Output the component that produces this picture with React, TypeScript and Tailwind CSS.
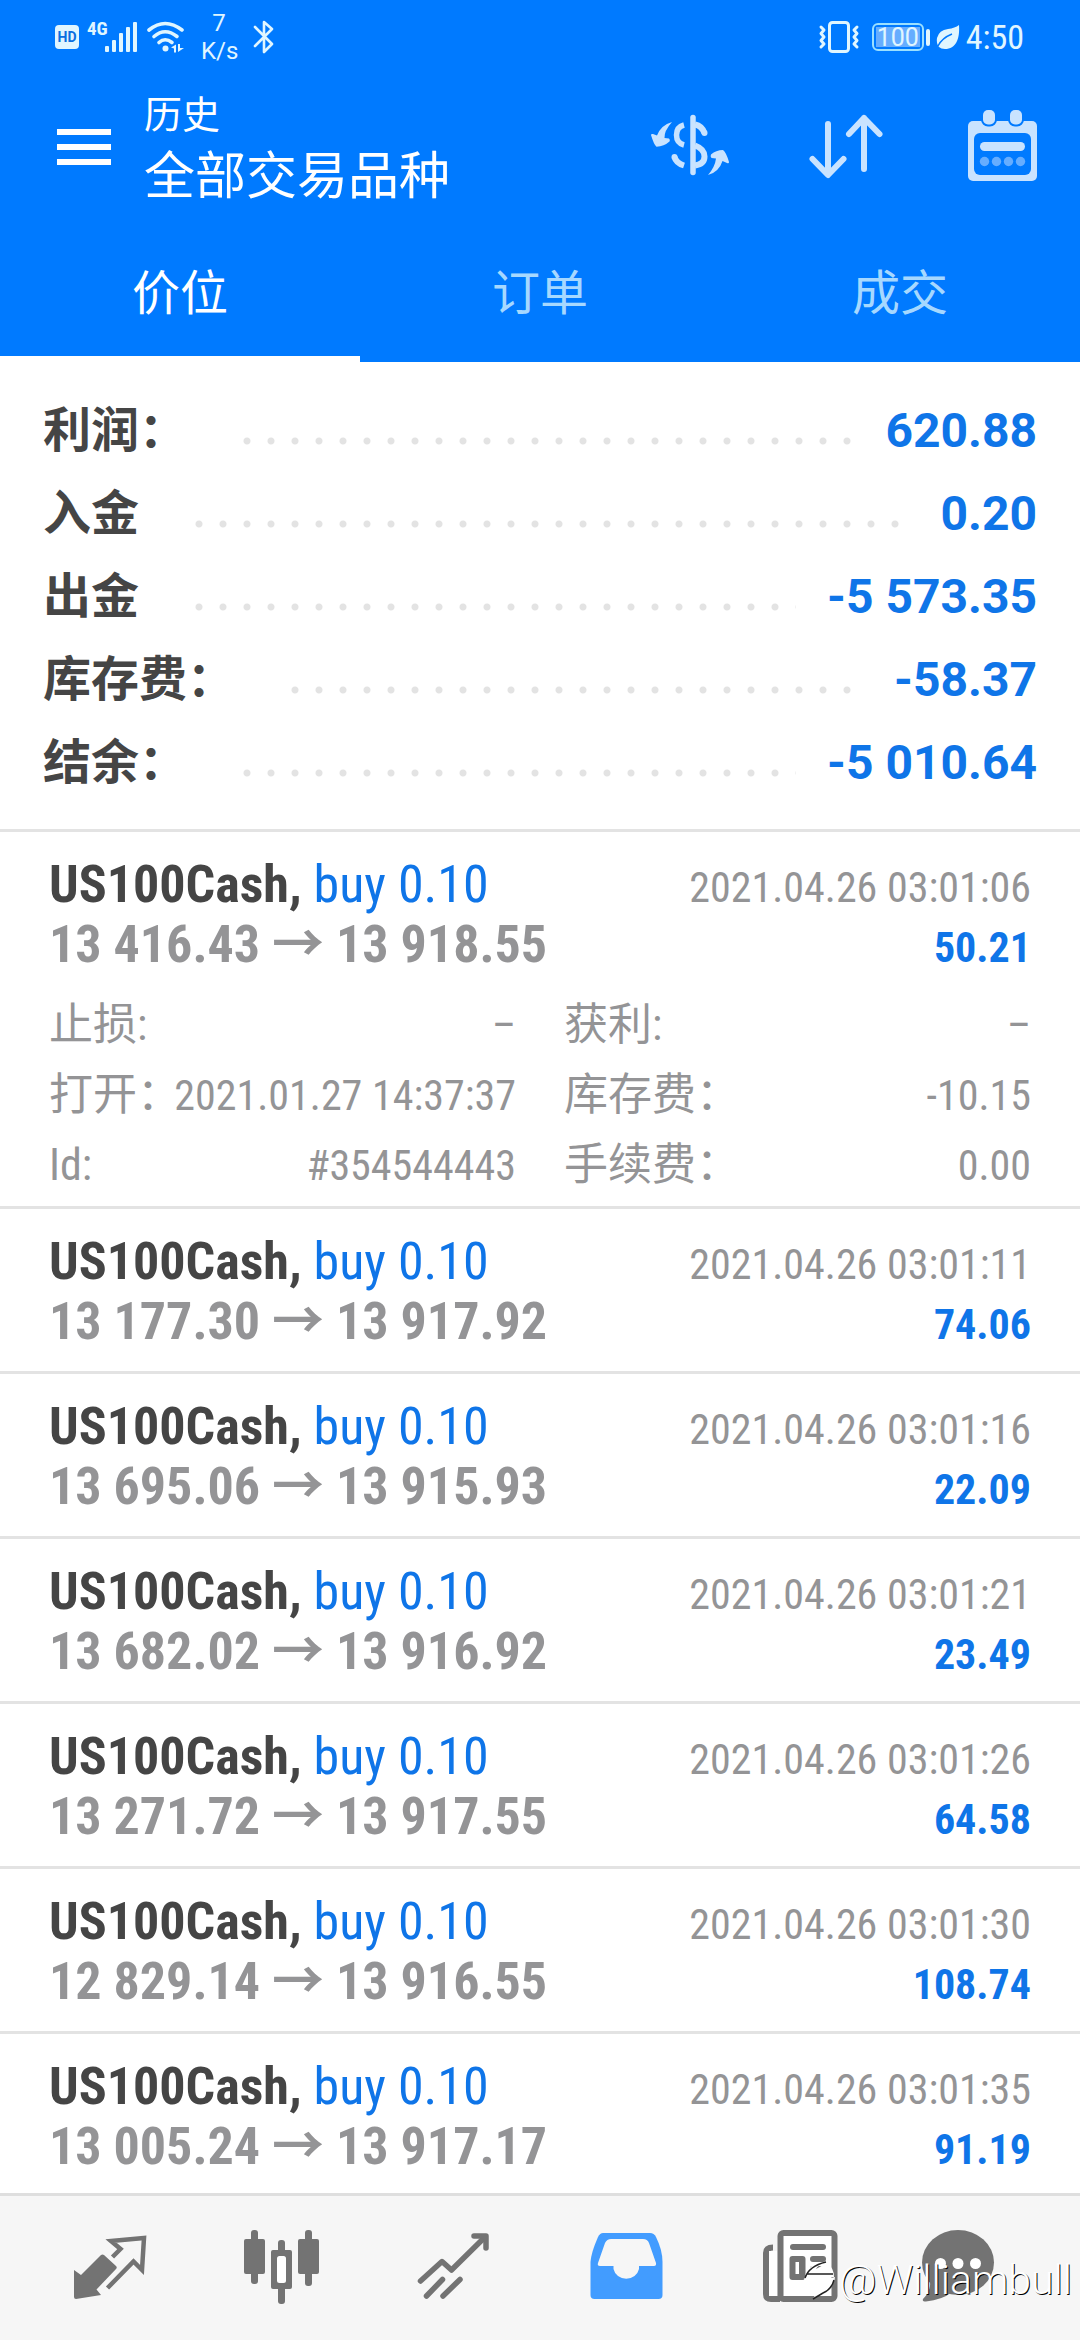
import React, { useState } from "react";
import clsx from "clsx";

const FONT = "font-['Roboto','Noto_Sans_CJK_SC',sans-serif]";
const CONDENSED =
  "font-['Roboto_Condensed','Roboto','Noto_Sans_CJK_SC',sans-serif]";

const TABS = ["价位", "订单", "成交"];

const SUMMARY = [
  { label: "利润：", value: "620.88" },
  { label: "入金", value: "0.20" },
  { label: "出金", value: "-5 573.35" },
  { label: "库存费：", value: "-58.37" },
  { label: "结余：", value: "-5 010.64" },
];

interface Trade {
  open: string;
  close: string;
  time: string;
  profit: string;
  details?: { label: string; value: string }[];
}

const TRADES: Trade[] = [
  {
    open: "13 416.43",
    close: "13 918.55",
    time: "2021.04.26 03:01:06",
    profit: "50.21",
    details: [
      { label: "止损:", value: "–" },
      { label: "获利:", value: "–" },
      { label: "打开：", value: "2021.01.27 14:37:37" },
      { label: "库存费：", value: "-10.15" },
      { label: "Id:", value: "#354544443" },
      { label: "手续费：", value: "0.00" },
    ],
  },
  { open: "13 177.30", close: "13 917.92", time: "2021.04.26 03:01:11", profit: "74.06" },
  { open: "13 695.06", close: "13 915.93", time: "2021.04.26 03:01:16", profit: "22.09" },
  { open: "13 682.02", close: "13 916.92", time: "2021.04.26 03:01:21", profit: "23.49" },
  { open: "13 271.72", close: "13 917.55", time: "2021.04.26 03:01:26", profit: "64.58" },
  { open: "12 829.14", close: "13 916.55", time: "2021.04.26 03:01:30", profit: "108.74" },
  { open: "13 005.24", close: "13 917.17", time: "2021.04.26 03:01:35", profit: "91.19" },
];

function StatusBar() {
  return (
    <div className="flex h-[72px] items-center justify-between pt-0.5 pl-[55px] pr-[56px] text-[#e0f6ff]">
      <div className="flex items-center">
        <span className="flex h-6 w-6 items-center justify-center rounded-sm bg-[#e0f6ff] text-[14px] font-bold text-[#0a6fe0]">
          HD
        </span>
        <span className={clsx(CONDENSED, "ml-2 mb-4 w-[18px] text-[19px] leading-5 font-bold")}>4G</span>
        <svg className="h-8 w-[34px]" viewBox="0 0 34 32" fill="currentColor">
          <rect x="0" y="25" width="4" height="6" rx="1" />
          <rect x="7" y="19" width="4" height="12" rx="1" />
          <rect x="14" y="12" width="4" height="19" rx="1" />
          <rect x="21" y="6" width="4" height="25" rx="1" />
          <rect x="28" y="1" width="4" height="30" rx="1" />
        </svg>
        <svg className="ml-2 h-8 w-[38px]" viewBox="0 0 38 32" fill="none" stroke="currentColor" strokeWidth="3.6" strokeLinecap="round">
          <path d="M2 9Q18 -4 35 9" />
          <path d="M7 15.500Q18 6 30 15.500" />
          <path d="M12 21.500Q18 16 25 21.500" />
          <circle cx="18.500" cy="27.500" r="3" fill="currentColor" stroke="none" />
          <path d="M24 26.500l5 -3v8h-2v-4zM31 31v-8h2v4h4z" fill="currentColor" stroke="none" />
        </svg>
        <span className="ml-4 flex w-9 flex-col text-center text-[24px] leading-7">
          <span>7</span>
          <span>K/s</span>
        </span>
        <svg className="ml-4 h-[34px] w-[22px]" viewBox="0 0 22 34" fill="none" stroke="currentColor" strokeWidth="2.6" strokeLinejoin="round" strokeLinecap="round">
          <path d="M2 7L19 24L11 32V2L19 9L2 26" />
        </svg>
      </div>
      <div className="flex items-center">
        <svg className="h-[34px] w-[42px]" viewBox="0 0 42 34" fill="none" stroke="currentColor" strokeWidth="3" strokeLinejoin="round" strokeLinecap="round">
          <rect x="11.500" y="2.500" width="19" height="29" rx="3" />
          <path d="M3 7L6 10L3 13.500L6 17L3 20.500L6 24L3 27" />
          <path d="M39 7L36 10L39 13.500L36 17L39 20.500L36 24L39 27" />
        </svg>
        <span className="ml-3 flex h-7 w-[52px] items-center rounded-md border-2 border-[#9be0ff] p-0.5">
          <span className="flex h-full w-full items-center justify-center bg-[#66adff] text-[25px] leading-none">
            100
          </span>
        </span>
        <span className="ml-0.5 h-[17px] w-1 rounded-sm bg-[#e0f6ff]" />
        <svg className="ml-1.5 h-[26px] w-6" viewBox="0 0 24 26">
          <path d="M23 1C24 15 20 25 9 25Q5 25 3 23Q0 19 1 14Q3 6 12 5Q19 4 23 1Z" fill="currentColor" />
          <path d="M2 22Q6 14 16 10" stroke="#007aff" strokeWidth="1.500" fill="none" />
        </svg>
        <span className={clsx(CONDENSED, "ml-1.5 text-[34px] leading-none")}>4:50</span>
      </div>
    </div>
  );
}

function DollarIcon() {
  return (
    <svg className="h-20 w-20" viewBox="0 0 80 80" fill="none" stroke="currentColor">
      <path d="M43 10.500V65.500" strokeWidth="5.500" strokeLinecap="round" />
      <path d="M34 18Q26.500 20 26.500 28T34 38" strokeWidth="5.500" />
      <path d="M24.500 50Q26 56 34 58.500" strokeWidth="6" />
      <circle cx="24.500" cy="50" r="3" fill="currentColor" stroke="none" />
      <path d="M45 17.500Q52 19 54.500 26" strokeWidth="6" />
      <circle cx="54.500" cy="26" r="3" fill="currentColor" stroke="none" />
      <path d="M45 38.500Q54.500 42 54.500 49.500T45 58.500" strokeWidth="6" />
      <g fill="currentColor" stroke="none">
        <path d="M22 15Q14 24 14.500 31L19 31.500Q20.500 33 19.500 34.500Q14 39.500 6.500 39.700Q4 38 1 28Q1 26.500 3 27L7 28.500Q11 18 22 15Z" />
        <path d="M58 68Q65 60 66 51.500L61.500 51Q60 49 61 47.500Q66 43 73 43Q76 45 79 55Q79 57 77 56L72.500 54Q69 65 58 68Z" />
      </g>
    </svg>
  );
}

function SortIcon() {
  return (
    <svg className="h-20 w-20" viewBox="0 0 80 80" fill="none" stroke="currentColor" strokeWidth="6" strokeLinecap="round" strokeLinejoin="round">
      <path d="M22 17V67M6.500 52L22 68L37.500 52" />
      <path d="M58 62V11M43 27L58 11L73.500 27" />
    </svg>
  );
}

function CalendarIcon() {
  return (
    <svg className="h-20 w-20" viewBox="0 0 80 80" fill="currentColor">
      <rect x="6" y="14" width="69" height="60" rx="5" />
      <rect x="12" y="26" width="57" height="42" rx="6" fill="#007aff" />
      <rect x="18" y="35" width="45" height="9" rx="4.500" />
      <g fill="#66adff">
        <circle cx="22.500" cy="54.500" r="4.700" />
        <circle cx="34.500" cy="54.500" r="4.700" />
        <circle cx="46.500" cy="54.500" r="4.700" />
        <circle cx="58.500" cy="54.500" r="4.700" />
      </g>
      <g stroke="#007aff" strokeWidth="4" paintOrder="stroke">
        <rect x="21" y="3" width="12" height="14.500" rx="5" />
        <rect x="48" y="3" width="12" height="14.500" rx="5" />
      </g>
    </svg>
  );
}

function Toolbar() {
  return (
    <div className="flex h-[150px] items-center pl-[57px] pr-[38px]">
      <button aria-label="菜单" className="flex w-[54px] flex-col gap-[9px]">
        <span className="h-1.5 bg-white" />
        <span className="h-1.5 bg-white" />
        <span className="h-1.5 bg-white" />
      </button>
      <div className="ml-[33px] flex-1 pt-2 text-white">
        <div className="text-[38px] leading-[52px]">历史</div>
        <h1 className="text-[51px] leading-[72px]">全部交易品种</h1>
      </div>
      <div className="flex gap-[76px] text-[#c9e3ff]">
        <button aria-label="交易品种"><DollarIcon /></button>
        <button aria-label="排序"><SortIcon /></button>
        <button aria-label="日期"><CalendarIcon /></button>
      </div>
    </div>
  );
}

function SummaryRow({ label, value }: { label: string; value: string }) {
  return (
    <div className="flex h-[83px] items-center text-[48px] leading-none font-bold">
      <dt className="text-[#454545]">{label}</dt>
      <span className="mt-5 mr-[31px] ml-12 h-2 flex-1 bg-[radial-gradient(circle,#e3e3e3_3px,transparent_4px)] bg-[size:24px_8px] bg-repeat-x" />
      <dd className="text-[#0f75e8]">{value}</dd>
    </div>
  );
}

function TradeItem({ trade }: { trade: Trade }) {
  return (
    <li
      className={clsx(
        CONDENSED,
        "border-b-3 border-[#e3e3e3] px-[49px] pt-[23px]",
        trade.details ? "pb-1.5" : "pb-[19px]",
      )}
    >
      <div className="flex h-[60px] items-baseline justify-between text-[52px] leading-[60px]">
        <div>
          <span className="font-bold text-[#454545]">US100Cash,</span>{" "}
          <span className="text-[#0f75e8]">buy 0.10</span>
        </div>
        <time className="text-[42px] text-[#949496]">{trade.time}</time>
      </div>
      <div className="flex h-[60px] items-baseline justify-between text-[52px] leading-[60px] font-bold">
        <div className="text-[#949496]">
          {trade.open} → {trade.close}
        </div>
        <div className="text-[42px] text-[#0f75e8]">{trade.profit}</div>
      </div>
      {trade.details && (
        <dl className="mt-[15px] grid grid-cols-2 gap-x-12 text-[44px] leading-[70px] text-[#949496]">
          {trade.details.map((item) => (
            <div key={item.label} className="flex h-[70px] items-baseline justify-between whitespace-nowrap">
              <dt className="min-w-0">{item.label}</dt>
              <dd className="text-[42px]">{item.value}</dd>
            </div>
          ))}
        </dl>
      )}
    </li>
  );
}

const NAV = [
  {
    name: "行情",
    icon: (
      <>
        <path d="M12 50L19 55L39 35Q40.500 34 42 35L54 46Q55.500 47.500 54 49L34.500 69.500L39 75L14 79Q12 79 12 77Z" fill="currentColor" />
        <path d="M50.500 37L58.500 29L49 21L82 18L80 50L71.500 41.500L45.500 68" fill="none" stroke="currentColor" strokeWidth="4.500" />
      </>
    ),
  },
  {
    name: "图表",
    icon: (
      <g fill="currentColor">
        <rect x="17" y="10" width="7" height="54" rx="3" />
        <rect x="10" y="19" width="21" height="35" rx="2" />
        <rect x="71" y="10" width="7" height="56" rx="3" />
        <rect x="64" y="19" width="21" height="35" rx="2" />
        <rect x="44" y="20" width="7" height="64" rx="3" />
        <rect x="37" y="30" width="21" height="39" rx="2" />
        <rect x="43" y="36" width="9" height="27" rx="2.500" fill="#fff" />
      </g>
    ),
  },
  {
    name: "交易",
    icon: (
      <g fill="none" stroke="currentColor" strokeWidth="5.500" strokeLinecap="round" strokeLinejoin="round">
        <path d="M14.500 61L36 41.500L45.500 50L79 17" />
        <path d="M68 16H80V28" />
        <path d="M20.500 76L36.500 59.500M37 76L54 59.500" />
      </g>
    ),
  },
  {
    name: "历史",
    icon: (
      <>
        <path d="M25 13H72Q76 13 78 17Q84.500 30 84.500 42V75Q84.500 79 80.500 79H16.500Q12.500 79 12.500 75V42Q13 33 20 17Q22 13 25 13Z" fill="currentColor" />
        <path d="M33 19H65Q69.500 19 71 23L78 43Q78.500 46 76 46H61V49A13 12 0 0 1 35.500 49V46H22Q19 46 20 43L27 23Q29 19 33 19Z" fill="#f6f6f6" />
      </>
    ),
  },
  {
    name: "新闻",
    icon: (
      <>
        <rect x="30.500" y="13" width="54" height="66" rx="3" fill="#fff" stroke="currentColor" strokeWidth="6" />
        <path d="M23 27.500Q16 27.500 16 33V74Q16 79 21 79H30" fill="none" stroke="currentColor" strokeWidth="6" />
        <rect x="19" y="31" width="8" height="45" fill="#fff" />
        <g fill="currentColor">
          <rect x="40" y="24" width="36" height="6" rx="3" />
          <rect x="39.500" y="36" width="16" height="24" rx="3" />
          <rect x="60" y="36" width="16" height="6" rx="3" />
          <rect x="60" y="46" width="16" height="5" rx="2.500" />
        </g>
        <rect x="45.500" y="42" width="3.500" height="12" fill="#fff" />
      </>
    ),
  },
  {
    name: "消息",
    icon: (
      <>
        <ellipse cx="36" cy="42.500" rx="36" ry="32.500" fill="currentColor" />
        <path d="M8 62Q9 71 1 79Q0 81.500 4 81.500Q20 80 30 72Z" fill="currentColor" />
        <g fill="#fff">
          <circle cx="18.500" cy="43.500" r="5.500" />
          <circle cx="36" cy="43.500" r="5.500" />
          <circle cx="53.500" cy="43.500" r="5.500" />
        </g>
      </>
    ),
  },
];

function BottomNav() {
  const active = "历史";
  return (
    <nav className="relative grid shrink-0 grid-cols-6 border-t-3 border-[#dedede] bg-[#f6f6f6] px-6 py-6">
      {NAV.map((item) => (
        <button
          key={item.name}
          aria-label={item.name}
          className={clsx(
            "flex justify-center",
            item.name === active ? "text-[#429cff]" : "text-[#737373]",
          )}
        >
          <svg className="h-24 w-24" viewBox="0 0 96 96">{item.icon}</svg>
        </button>
      ))}
      {/* Author mark */}
      <div className="absolute right-2 bottom-9 flex items-center gap-1 text-white">
        <svg className="h-10 w-8" viewBox="0 0 32 40">
          <path d="M1 20Q3 7 15 3L25 1Q16 4 13 9L24 3Q31 8 31 17H16Q27 19 32 17Q31 28 20 33L10 39L13 33Q6 31 7 26Q12 24 9 17Z" fill="#fff" />
          <path d="M2 18Q6 6 23 2M4 14H30M31 20Q29 29 20 33L10 39" fill="none" stroke="#222" strokeWidth="1.500" />
        </svg>
        <span className="text-[41px] leading-[48px] font-light [text-shadow:1px_1px_0_#000]">@Williambull</span>
      </div>
    </nav>
  );
}

export default function App() {
  const [tab, setTab] = useState(TABS[0]);

  return (
    <div className={clsx(FONT, "flex h-screen flex-col bg-white")}>
      <header className="shrink-0 bg-[#007aff]">
        <StatusBar />
        <Toolbar />
        <div role="tablist" className="grid grid-cols-3">
          {TABS.map((name) => (
            <button
              key={name}
              role="tab"
              aria-selected={tab === name}
              onClick={() => setTab(name)}
              className={clsx(
                "h-[140px] border-y-6 border-transparent pt-1 text-[48px] leading-none",
                tab === name ? "border-b-white text-white" : "text-[#a6d8ff]",
              )}
            >
              {name}
            </button>
          ))}
        </div>
      </header>

      <main className="min-h-0 flex-1 overflow-hidden">
        <dl className="border-b-3 border-[#e3e3e3] px-[43px] pt-[27px] pb-[25px]">
          {SUMMARY.map((row) => (
            <SummaryRow key={row.label} {...row} />
          ))}
        </dl>
        <ul>
          {TRADES.map((trade) => (
            <TradeItem key={trade.time} trade={trade} />
          ))}
        </ul>
      </main>

      <BottomNav />
    </div>
  );
}
